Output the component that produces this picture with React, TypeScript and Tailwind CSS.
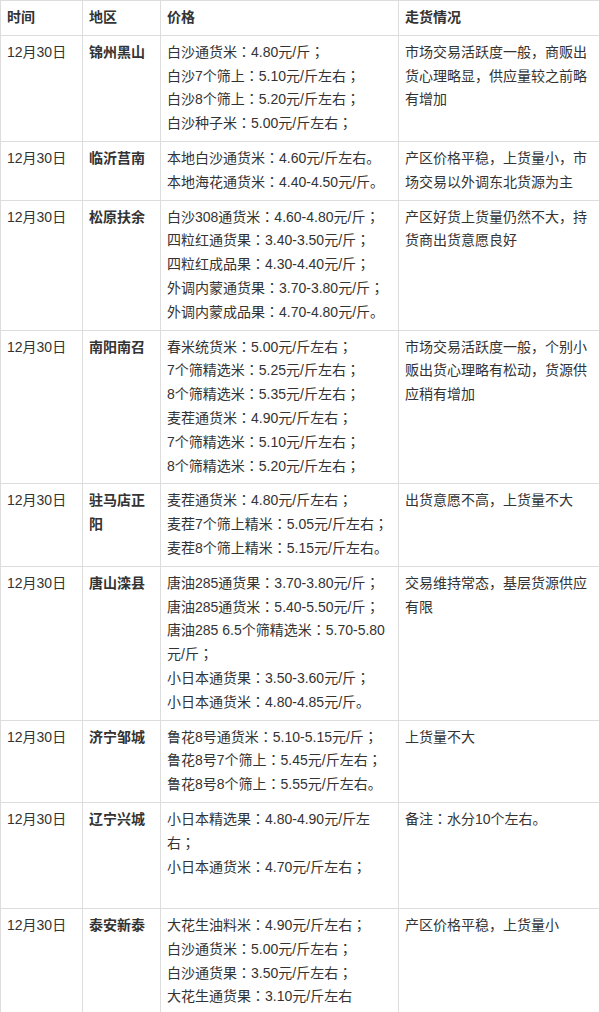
import React from "react";

type Row = { date: string; region: string; prices: string[]; note: string };

const rows: Row[] = [
  {
    date: "12月30日",
    region: "锦州黑山",
    prices: ["白沙通货米：4.80元/斤；", "白沙7个筛上：5.10元/斤左右；", "白沙8个筛上：5.20元/斤左右；", "白沙种子米：5.00元/斤左右；"],
    note: "市场交易活跃度一般，商贩出货心理略显，供应量较之前略有增加",
  },
  {
    date: "12月30日",
    region: "临沂莒南",
    prices: ["本地白沙通货米：4.60元/斤左右。", "本地海花通货米：4.40-4.50元/斤。"],
    note: "产区价格平稳，上货量小，市场交易以外调东北货源为主",
  },
  {
    date: "12月30日",
    region: "松原扶余",
    prices: ["白沙308通货米：4.60-4.80元/斤；", "四粒红通货果：3.40-3.50元/斤；", "四粒红成品果：4.30-4.40元/斤；", "外调内蒙通货果：3.70-3.80元/斤；", "外调内蒙成品果：4.70-4.80元/斤。"],
    note: "产区好货上货量仍然不大，持货商出货意愿良好",
  },
  {
    date: "12月30日",
    region: "南阳南召",
    prices: ["春米统货米：5.00元/斤左右；", "7个筛精选米：5.25元/斤左右；", "8个筛精选米：5.35元/斤左右；", "麦茬通货米：4.90元/斤左右；", "7个筛精选米：5.10元/斤左右；", "8个筛精选米：5.20元/斤左右；"],
    note: "市场交易活跃度一般，个别小贩出货心理略有松动，货源供应稍有增加",
  },
  {
    date: "12月30日",
    region: "驻马店正阳",
    prices: ["麦茬通货米：4.80元/斤左右；", "麦茬7个筛上精米：5.05元/斤左右；", "麦茬8个筛上精米：5.15元/斤左右。"],
    note: "出货意愿不高，上货量不大",
  },
  {
    date: "12月30日",
    region: "唐山滦县",
    prices: ["唐油285通货果：3.70-3.80元/斤；", "唐油285通货米：5.40-5.50元/斤；", "唐油285 6.5个筛精选米：5.70-5.80元/斤；", "小日本通货果：3.50-3.60元/斤；", "小日本通货米：4.80-4.85元/斤。"],
    note: "交易维持常态，基层货源供应有限",
  },
  {
    date: "12月30日",
    region: "济宁邹城",
    prices: ["鲁花8号通货米：5.10-5.15元/斤；", "鲁花8号7个筛上：5.45元/斤左右；", "鲁花8号8个筛上：5.55元/斤左右。"],
    note: "上货量不大",
  },
  {
    date: "12月30日",
    region: "辽宁兴城",
    prices: ["小日本精选果：4.80-4.90元/斤左右；", "小日本通货米：4.70元/斤左右；", ""],
    note: "备注：水分10个左右。",
  },
  {
    date: "12月30日",
    region: "泰安新泰",
    prices: ["大花生油料米：4.90元/斤左右；", "白沙通货米：5.00元/斤左右；", "白沙通货果：3.50元/斤左右；", "大花生通货果：3.10元/斤左右"],
    note: "产区价格平稳，上货量小",
  },
];

const cell = "border border-[#dddddd] px-[6px] py-[5px] align-top text-left";

function Txt({ s }: { s: string }) {
  const parts = s.split(/([：；])/);
  return (
    <>
      {parts.map((p, i) =>
        p === "：" || p === "；" ? (
          <span key={i} className="leading-none" style={{ fontFamily: '"Noto Sans CJK JP", sans-serif' }}>
            {p}
          </span>
        ) : (
          <React.Fragment key={i}>{p}</React.Fragment>
        )
      )}
    </>
  );
}

export default function App() {
  return (
    <div
      className="w-[599px] bg-white text-[14px] leading-[1.7] text-[#333333]"
      style={{ fontFamily: '"Liberation Sans", "Noto Sans CJK SC", sans-serif' }}
    >
      <table className="w-[599px] table-fixed border-collapse">
        <colgroup>
          <col className="w-[82px]" />
          <col className="w-[78px]" />
          <col className="w-[238px]" />
          <col className="w-[201px]" />
        </colgroup>
        <thead>
          <tr>
            <th className={`${cell} font-bold`}>时间</th>
            <th className={`${cell} font-bold`}>地区</th>
            <th className={`${cell} font-bold`}>价格</th>
            <th className={`${cell} font-bold`}>走货情况</th>
          </tr>
        </thead>
        <tbody>
          {rows.map((r, i) => (
            <tr key={i}>
              <td className={cell}>{r.date}</td>
              <td className={`${cell} font-bold`}>{r.region}</td>
              <td className={cell}>
                {r.prices.map((p, j) => (
                  <div key={j} className="min-h-[23.8px]">
                    <Txt s={p} />
                  </div>
                ))}
              </td>
              <td className={cell}>
                <Txt s={r.note} />
              </td>
            </tr>
          ))}
        </tbody>
      </table>
    </div>
  );
}
